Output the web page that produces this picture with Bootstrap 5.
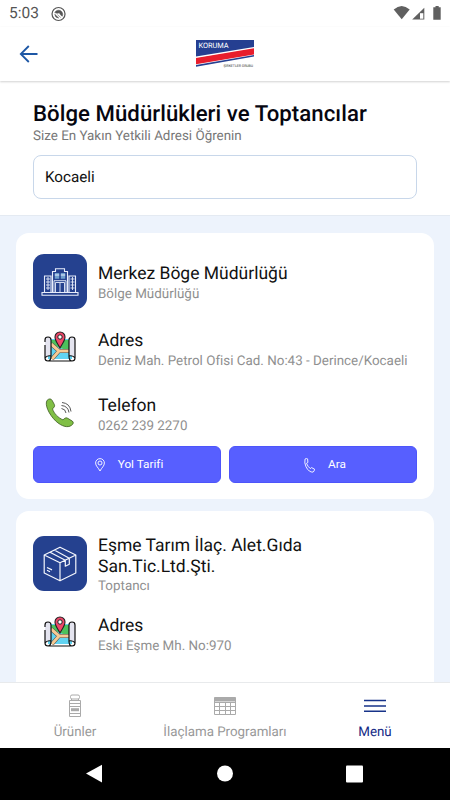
<!DOCTYPE html>
<html lang="tr">
<head>
<meta charset="utf-8">
<meta name="viewport" content="width=device-width, initial-scale=1">
<title>Bölge Müdürlükleri ve Toptancılar</title>
<link href="https://cdn.jsdelivr.net/npm/bootstrap@5.3.0/dist/css/bootstrap.min.css" rel="stylesheet">
<style>
body{font-family:Roboto,"Liberation Sans",sans-serif;color:#111;line-height:1.2;text-rendering:geometricPrecision}
svg{display:block;flex:none}
.app{height:800px}
.status{height:27px;padding:0 7px 0 9px;font-size:15.5px;color:#555}
.topbar{height:54px;padding:0 19px;box-shadow:0 1px 2px rgba(0,0,0,.18);z-index:1}
.intro{height:135px;padding:20px 33px 0;border-bottom:1px solid #e4eaf2}
.intro h1{font-size:22.2px;line-height:26px;font-weight:500;color:#060610;margin:0 0 1px;letter-spacing:.05px;white-space:nowrap}
.hint{font-size:13.4px;line-height:18px;color:#777}
.city{height:44px;margin-top:9px;border:1px solid #c8d7ea;border-radius:8px;font-size:15.2px;padding:1px 11px 0;color:#111}
.list-area{background:#edf3fc;padding:17px 16px 0;min-height:0}
.office{border-radius:13px;padding:21px 17px 16px;margin-bottom:12px}
.office-two{padding-top:23px}
.line{height:65px}
.line-head{height:75px}
.line-tall{height:80px}
.line-phone{height:52px}
.pic{width:54px;margin-right:11px;flex:none}
.map-pic{padding-top:1px}
.tile{width:54px;height:55px;border-radius:11px;background:#25418f}
.tile-two{margin-top:2px}
.name{font-size:17.5px;line-height:20.5px;padding-top:2px}
.sub{font-size:13.4px;line-height:20px;color:#909090;white-space:nowrap}
.act{height:37px;background:#575fff;border:1px solid #4d55fa;border-radius:6px;color:#fff;font-size:11.8px;padding:1px 0 0 4px}
.act svg{margin-right:13px}
.tabs{height:66px;border-top:1px solid #e8eaec;font-size:13.35px;color:#999}
.tabs>div{width:150px;padding-top:11px}
.tab-name{padding-top:7px}
.sys{height:52px;background:#000}
.on{color:#142a86}
</style>
</head>
<body>
<svg width="0" height="0" class="position-absolute">
  <symbol id="map" viewBox="0 0 34 34">
    <path d="M5 9h24v20H5z" fill="#62d4f2"/>
    <path d="M7 10h20v12l-9-4-11-4z" fill="#4cc15c"/>
    <path d="M8 14l8 7h11M16 21L9 29" fill="none" stroke="#444" stroke-width="4"/>
    <path d="M8 14l8 7h11M16 21L9 29" fill="none" stroke="#f7ca94" stroke-width="3"/>
    <path d="M2 28V10q0-3 3-3t3 3v16q-5-1-6 2zM26 26V10q0-3 3-3t3 3v18q-1-3-6-2z" fill="#e4e4ef"/>
    <path d="M2 12v-2q0-3 3-3t3 3v16q-4-1-6 2M2 15v13q0 3 3 3h24q3 0 3-3V10q0-3-3-3t-3 3v16q4-1 6 2M5 31q3 0 3-5M29 31q-3 0-3-5" fill="none" stroke="#111" stroke-width="1.2"/>
    <path d="M17 18c-2-4-5-7-5-11a5 5 0 0 1 10 0c0 4-3 7-5 11z" fill="#f0486a" stroke="#222" stroke-width="1.1"/>
    <circle cx="17" cy="7" r="2.2" fill="#fff" stroke="#222"/>
  </symbol>
</svg>
<div class="app d-flex flex-column bg-white overflow-hidden">
  <div class="status d-flex flex-shrink-0 align-items-center">
    <span>5:03</span>
    <svg class="ms-2 ps-1" width="20" height="16" viewBox="0 0 17 16"><circle cx="8" cy="8" r="6.9" fill="none" stroke="#555" stroke-width="1.3"/><path d="M4 6.5a4.4 4.4 0 0 1 8 3.8L10.5 9.3 8.8 6.8 6.5 7.3zM4 8.3l4.2 4a4.4 4.4 0 0 1-4.2-4zM6.8 8.7l3.5 3" fill="#555" stroke="#555" stroke-width=".6"/></svg>
    <svg class="ms-auto" width="50" height="16" viewBox="393 5 50 16"><path d="M393.7 8.6q8-7 16 0l-8 9.600z" fill="#606060"/><path d="M424.3 6.8V18.5H412.2z" fill="#606060"/><path d="M420 12.2h3.3v5.5H420z" fill="#fff"/><path d="M435.5 5h3.2v1.2h2V18.8h-7.400V6.200h2.200z" fill="#606060"/></svg>
  </div>
  <header class="topbar d-flex flex-shrink-0 align-items-center position-relative">
    <svg width="20" height="18" viewBox="0 0 20 18"><path d="M18.5 9H2M9.8 1L1.8 9l8 8" fill="none" stroke="#1d57a5" stroke-width="1.8"/></svg>
    <svg class="mx-auto" width="58" height="30" viewBox="0 0 58 30">
      <path d="M0 1h58v8.5L0 20z" fill="#253f91"/><path d="M0 17.5L58 8v2L0 19.5z" fill="#fff"/><path d="M0 19L58 9.3v6.2L0 25.2z" fill="#e81d2c"/><path d="M0 26L58 16v1.400L0 27.800z" fill="#253f91"/>
      <text x="2.5" y="8.8" font-size="7.4" textLength="30" fill="#fff" font-family="Roboto,sans-serif">KORUMA</text>
      <text x="27.5" y="27.800" font-size="3.5" textLength="29.5" fill="#333" font-family="Roboto,sans-serif">ŞİRKETLER GRUBU</text>
    </svg>
    <span class="ps-3 pe-1"></span>
  </header>
  <section class="intro flex-shrink-0">
    <h1>Bölge Müdürlükleri ve Toptancılar</h1>
    <div class="hint">Size En Yakın Yetkili Adresi Öğrenin</div>
    <div class="city d-flex align-items-center">Kocaeli</div>
  </section>
  <main class="list-area flex-grow-1 overflow-hidden">
    <article class="office bg-white">
      <div class="line-head d-flex">
        <div class="pic"><div class="tile d-flex align-items-center justify-content-center">
          <svg width="38" height="30" viewBox="0 0 38 30" fill="none" stroke="#e8edfb" stroke-width="1.1"><path d="M1 25.5h36v2.7H1zM3.5 25V9H10v16M28 25V9h6.5v16M11.5 25V4.500h3V1.800h9v2.700h3V25"/><path d="M5 12h4M5 15h4M5 18h4M5 21h4M29.5 12h4M29.5 15h4M29.5 18h4M29.5 21h4M7 10v13M31.5 10v13M14.5 15.5h9v9.5M14.5 25V15.5M19 16v9M13 25V13.7h12V25" stroke-width=".9"/><path d="M13.8 6h4.4v5.8h-4.400zM19.800 6h4.400v5.800h-4.400z" fill="#6f9fce" stroke="none"/><path d="M13.8 8h4.4M19.8 8h4.4"/></svg>
        </div></div>
        <div class="pt-2"><div class="name">Merkez Böge Müdürlüğü</div><div class="sub">Bölge Müdürlüğü</div></div>
      </div>
      <div class="line d-flex">
        <div class="pic map-pic"><svg class="mx-auto" width="34" height="34"><use href="#map"/></svg></div>
        <div><div class="name">Adres</div><div class="sub">Deniz Mah. Petrol Ofisi Cad. No:43 - Derince/Kocaeli</div></div>
      </div>
      <div class="line-phone d-flex">
        <div class="pic pt-1"><svg class="mx-auto" width="30" height="30" viewBox="0 0 30 30"><path d="M2.2 2.2C4 .5 6 .5 7 2.2L9.3 6.4c1 2-.5 3-1.8 4.5 1.5 4.6 5.5 8.8 10.5 11 1.8-2 3-2.5 4.7-1.6l4.6 2.8c1.6 1.1 1.1 3-.9 4.3-3.5 2.5-9.5 1.4-15.800-4.500C4 16.500-.8 6.300 2.200 2.200z" fill="#80bf45" stroke="#3c5b22" stroke-width=".8"/><path d="M16.500 10.500q4 .5 4.500 4.500M16.500 7.500q6.500 .5 7.500 7M17 4.500q8 .8 9 9" fill="none" stroke="#444" stroke-width=".9"/></svg></div>
        <div><div class="name">Telefon</div><div class="sub">0262 239 2270</div></div>
      </div>
      <div class="d-flex gap-2">
        <button class="act btn flex-fill w-50 d-flex align-items-center justify-content-center"><svg width="10" height="14" viewBox="0 0 10 14" fill="none" stroke="#fff" stroke-width=".9"><path d="M5 13C3.2 9.5.6 8 .6 5a4.4 4.4 0 0 1 8.8 0C9.4 8 6.8 9.5 5 13z"/><circle cx="5" cy="5" r="2"/></svg>Yol Tarifi</button>
        <button class="act btn flex-fill w-50 d-flex align-items-center justify-content-center"><svg width="11" height="15" viewBox="0 0 11 15" fill="none" stroke="#fff" stroke-width=".9"><path d="M1 1.1q1.3-1.1 2.6-.2l.3 3.5-1.4.9q1.2 3.4 3.8 5.3l1.2-1 3 1.5q0 2-1.4 3Q5 14.5 2 8.8.2 5 1 1.1z"/></svg>Ara</button>
      </div>
    </article>
    <article class="office office-two bg-white">
      <div class="line-tall d-flex">
        <div class="pic"><div class="tile tile-two d-flex align-items-center justify-content-center">
          <svg width="34" height="36" viewBox="0 0 34 36" fill="none" stroke="#f4f6fc" stroke-width="1.2" stroke-linejoin="round"><path d="M17 1.2L32.8 9v18L17 34.8 1.2 27V9zM1.2 9L17 16.8 32.8 9M17 16.8v18M7 6.2l15.3 8v6l4-2v-6L11.3 4M4 21.5l5 2.4M4 24.3l3 1.4"/></svg>
        </div></div>
        <div><div class="name">Eşme Tarım İlaç. Alet.Gıda<br>San.Tic.Ltd.Şti.</div><div class="sub">Toptancı</div></div>
      </div>
      <div class="line d-flex">
        <div class="pic map-pic"><svg class="mx-auto" width="34" height="34"><use href="#map"/></svg></div>
        <div><div class="name">Adres</div><div class="sub">Eski Eşme Mh. No:970</div></div>
      </div>
      <div class="line"></div>
    </article>
  </main>
  <nav class="tabs d-flex flex-shrink-0 text-center">
    <div><svg class="mx-auto" width="14" height="24" viewBox="0 0 14 24" fill="none" stroke="#aaa"><rect x="2.5" y="1" width="9" height="4" rx="1.5"/><path d="M3.5 5v1.5h7V5M1.5 6.5h11v16h-11zM1.5 9.5h11M1.5 12.5h11M1.5 19.5h11"/><path d="M3 15.7h8" stroke-width="3"/></svg><div class="tab-name">Ürünler</div></div>
    <div><svg class="mx-auto" width="24" height="24" viewBox="0 0 24 24" fill="none" stroke="#aaa"><path d="M1.5 3.5h21v17h-21zM1.5 12.5h21M1.5 16.5h21M6.5 8v12M12.5 8v12M17.5 8v12M1.5 8.5h21"/><path d="M1.5 5.5h21" stroke-width="4"/></svg><div class="tab-name">İlaçlama Programları</div></div>
    <div class="on"><svg class="mx-auto" width="22" height="24" viewBox="0 0 22 24" stroke="#173389" stroke-width="1.5"><path d="M0 6.5h22M0 12h22M0 17.3h22"/></svg><div class="tab-name">Menü</div></div>
  </nav>
  <footer class="sys flex-shrink-0">
    <svg width="450" height="52" viewBox="0 0 450 52" fill="#fff"><path d="M86 25.5L102 16.8V34.5z"/><circle cx="225" cy="25.5" r="8"/><rect x="346" y="17.5" width="17" height="17" rx="1"/></svg>
  </footer>
</div>
<script src="https://cdn.jsdelivr.net/npm/bootstrap@5.3.0/dist/js/bootstrap.bundle.min.js"></script>
</body>
</html>
